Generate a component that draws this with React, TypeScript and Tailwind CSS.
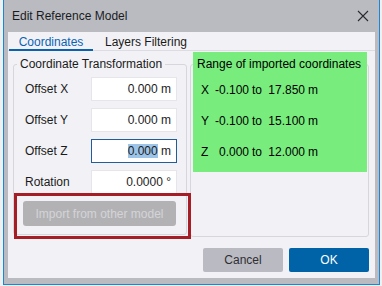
import React from 'react';

type Offset = { label: string; value: string; unit: string; focused?: boolean };

const offsets: Offset[] = [
  { label: 'Offset X', value: '0.000', unit: 'm' },
  { label: 'Offset Y', value: '0.000', unit: 'm' },
  { label: 'Offset Z', value: '0.000', unit: 'm', focused: true },
  { label: 'Rotation', value: '0.0000', unit: '°' },
];

const ranges = [
  { axis: 'X', from: '-0.100', to: '17.850' },
  { axis: 'Y', from: '-0.100', to: '15.100' },
  { axis: 'Z', from: '0.000', to: '12.000' },
];

function ValueBox({ item }: { item: Offset }) {
  return (
    <div
      className={`w-[86px] h-[24px] bg-white flex items-center justify-end pr-[5px] text-[#1c1c24] ${
        item.focused ? 'border border-[#215d98]' : 'border border-[#e6e6ea]'
      }`}
    >
      {item.focused ? (
        <>
          <span className="bg-[#9cc4e8] leading-[14px]">{item.value}</span>
          <span className="whitespace-pre"> {item.unit}</span>
        </>
      ) : (
        <span className="whitespace-pre">
          {item.value} {item.unit}
        </span>
      )}
    </div>
  );
}

export default function App() {
  return (
    <div className="w-[382px] h-[286px] bg-[#f0f0f0] font-['Liberation_Sans',Arial,sans-serif] text-[12px] leading-[16px] text-[#1a1a1a] overflow-hidden">
      <div className="ml-[3px] w-[377px] h-[285px] bg-[#b9bbc1] border-x border-b border-[#1888d6] flex flex-col">
        {/* Title bar */}
        <div className="h-[32px] flex items-center justify-between pl-[8px] pr-[10px] shrink-0">
          <span className="text-[#1b1b1f]">Edit Reference Model</span>
          <svg width="12" height="12" viewBox="0 0 12 12" className="text-[#2a2a2e]">
            <path d="M1 1 L11 11 M11 1 L1 11" stroke="currentColor" strokeWidth="1.1" fill="none" />
          </svg>
        </div>

        {/* Client area */}
        <div className="relative mx-[4px] h-[246px] bg-[#f2f2f6] flex flex-col">
          {/* Tabs */}
          <div className="h-[19px] flex border-b border-[#dcdce2] shrink-0">
            <div className="ml-[1px] w-[84px] h-[19px] border-b-2 border-[#0a62ad] flex justify-center pt-[2px] text-[#0a64b4]">
              Coordinates
            </div>
            <div className="w-[106px] flex justify-center pt-[2px]">Layers Filtering</div>
          </div>

          <div className="flex items-start pl-[5px]">
            {/* Coordinate transformation */}
            <fieldset className="mt-[5px] w-[174px] border border-[#d6d6dc] rounded-[3px] pl-[3px] pb-[8px]">
              <legend className="px-[3px]">Coordinate Transformation</legend>
              <div className="mt-[5px] pl-[6px] flex flex-col gap-[7px]">
                {offsets.map((o) => (
                  <div key={o.label} className="flex items-center justify-between pr-[9px]">
                    <span className="pl-[2px]">{o.label}</span>
                    <ValueBox item={o} />
                  </div>
                ))}
                <button className="w-[153px] h-[25px] rounded-[3px] bg-[#b2b2b5] text-[#d4d4d7]">
                  Import from other model
                </button>
              </div>
            </fieldset>

            {/* Range of imported coordinates */}
            <div className="ml-[3px] mt-[13px] w-[179px] h-[173px] border border-[#d6d6dc] rounded-[3px]">
              <div className="-mt-[13px] ml-[2px] w-[174px] h-[120px] bg-[#78ed7e] text-black pt-[4px] pl-[4px]">
                <div>Range of imported coordinates</div>
                <div className="mt-[10px] flex flex-col gap-[15px]">
                  {ranges.map((r) => (
                    <div key={r.axis} className="flex pl-[4px]">
                      <span className="w-[12px]">{r.axis}</span>
                      <span className="w-[36px] text-right">{r.from}</span>
                      <span className="ml-[3px] w-[10px]">to</span>
                      <span className="w-[43px] text-right">{r.to}</span>
                      <span className="ml-[3px]">m</span>
                    </div>
                  ))}
                </div>
              </div>
            </div>
          </div>

          {/* Buttons */}
          <div className="mt-[11px] flex justify-end gap-[6px] pr-[6px]">
            <button className="w-[80px] h-[24px] rounded-[2px] bg-[#babbc2] text-[#2e2e34]">Cancel</button>
            <button className="w-[80px] h-[24px] rounded-[2px] bg-[#0063a7] text-white">OK</button>
          </div>

          {/* Red highlight annotation */}
          <div className="absolute left-[6px] top-[161px] w-[177px] h-[46px] border-[3px] border-[#a51d25] pointer-events-none" />
        </div>
      </div>
    </div>
  );
}
